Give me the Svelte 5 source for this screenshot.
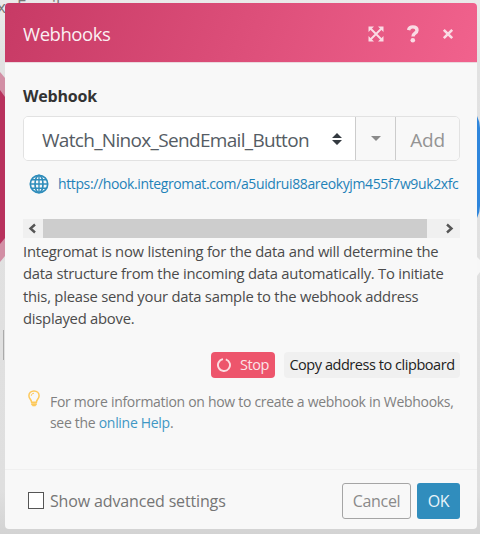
<script>
  const webhooks = ['Watch_Ninox_SendEmail_Button'];
  const address = 'https://hook.integromat.com/a5uidrui88areokyjm455f7w9uk2xfc';
  const message = [
    'Integromat is now listening for the data and will determine the',
    'data structure from the incoming data automatically. To initiate',
    'this, please send your data sample to the webhook address',
    'displayed above.'
  ];
  let selected = $state(webhooks[0]);
  let advanced = $state(false);
</script>

<div class="stage">
  <!-- scenario canvas showing around the dialog -->
  <svg class="canvas" width="480" height="534" viewBox="0 0 480 534" aria-hidden="true">
    <path d="M0 72L5 78V256L0 262Z" fill="#d28fa5" />
    <path d="M0 90L5 97V238L0 244Z" fill="#b8325d" />
    <path d="M477 116Q480 122 480 128V206Q480 212 477 218Z" fill="#2f86dc" />
    <path d="M477 257L480 260V272L477 276Z" fill="#f7f7f7" />
    <path d="M3.5 330V360" stroke="#aaa" />
    <text x="-3" y="13">x</text>
    <text x="17" y="12">Email</text>
  </svg>

  <div class="dialog">
    <header>
      <h1>Webhooks</h1>
      <div class="tools">
        <svg class="expand" width="16" height="16" viewBox="0 0 16 16">
          <path d="M2 2L14 14M14 2L2 14" stroke="currentColor" stroke-width="1.9" />
          <path d="M.5 .5H6L.5 6ZM15.5 .5V6L10 .5ZM15.5 15.5H10L15.5 10ZM.5 15.5V10L6 15.5Z" fill="currentColor" />
        </svg>
        <svg class="help" width="12" height="18" viewBox="0 0 12 18">
          <path d="M1.5 5.2C2 2.9 3.6 1.9 5.8 1.9C8.3 1.9 10 3.2 10 5.2C10 8.4 6 8 6 11.6" fill="none" stroke="currentColor" stroke-width="3.4" />
          <circle cx="5.8" cy="15.3" r="2.3" fill="currentColor" />
        </svg>
        <svg class="close" width="12" height="12" viewBox="0 0 12 12">
          <path d="M1.8 1.8L10.2 10.2M10.2 1.8L1.8 10.2" stroke="currentColor" stroke-width="2.6" />
        </svg>
      </div>
    </header>

    <main>
      <div class="label">Webhook</div>
      <div class="picker">
        <div class="select">
          <span>{selected}</span>
          <svg width="10" height="12" viewBox="0 0 10 12">
            <path d="M0 5L5 0L10 5ZM0 7H10L5 12Z" fill="#343a40" />
          </svg>
        </div>
        <button class="caret" aria-label="More">
          <svg width="10" height="5" viewBox="0 0 10 5"><path d="M0 0H10L5 5Z" fill="#8b8b8b" /></svg>
        </button>
        <button class="add">Add</button>
      </div>

      <div class="address">
        <svg width="20" height="20" viewBox="0 0 20 20" fill="none" stroke="#2f8dbb" stroke-width="1.7">
          <circle cx="10" cy="10" r="8.7" />
          <ellipse cx="10" cy="10" rx="4" ry="8.7" />
          <path d="M10 1V19M1.5 10H18.5M2.6 5.8H17.4M2.6 14.2H17.4" stroke-width="1.4" />
        </svg>
        <span>{address}</span>
      </div>

      <div class="scroll">
        <svg width="20" height="19" viewBox="0 0 20 19"><path d="M12 5.5L7.5 9.5L12 13.5" /></svg>
        <div class="thumb"></div>
        <svg width="20" height="19" viewBox="0 0 20 19"><path d="M7 5.5L11.5 9.5L7 13.5" /></svg>
      </div>

      <p class="message">
        {#each message as line}
          <span>{line}</span>
        {/each}
      </p>

      <div class="actions">
        <button class="stop">
          <svg width="14" height="14" viewBox="0 0 14 14">
            <path d="M8.8 1.3A6 6 0 1 1 6 1.1" fill="none" stroke="#fff" stroke-width="1.9" opacity=".8" />
          </svg>
          <span>Stop</span>
        </button>
        <button class="copy">Copy address to clipboard</button>
      </div>

      <div class="hint">
        <svg width="12" height="17" viewBox="0 0 12 17" fill="none" stroke="#fdc95c" stroke-width="1.5">
          <path d="M3.6 12.2C3.6 9.6 .9 8.8 .9 5.8C.9 2.8 3.1 .9 6 .9S11.1 2.8 11.1 5.8C11.1 8.8 8.4 9.6 8.4 12.2Z" />
          <path d="M3.3 5.8C3.3 4.3 4.3 3.3 6 3.3" stroke-width="1" />
          <path d="M3.5 13.5H8.5V15H7.5V16H4.5V15H3.5Z" fill="#fdc95c" stroke-width=".6" />
        </svg>
        <p>
          <span>For more information on how to create a webhook in Webhooks,</span>
          <span class="second">see the <a href="#help">online Help</a>.</span>
        </p>
      </div>
    </main>

    <footer>
      <label>
        <input type="checkbox" bind:checked={advanced} />
        <span>Show advanced settings</span>
      </label>
      <button class="cancel">Cancel</button>
      <button class="ok">OK</button>
    </footer>
  </div>
</div>

<style>
  :global(body) {
    font-family: 'Open Sans', 'Noto Sans', sans-serif;
  }
  .stage {
    position: relative;
    box-sizing: border-box;
    width: 480px;
    height: 534px;
    padding: 3px 3px 5px 5px;
    overflow: hidden;
    background: linear-gradient(#eaeaea, #e2e2e2 60px, #dfdfdf 490px, #d3d3d3);
  }
  .canvas {
    position: absolute;
    inset: 0;
  }
  .canvas text {
    font-size: 17px;
    fill: #777;
  }
  .dialog {
    position: relative;
    display: flex;
    flex-direction: column;
    height: 526px;
    border-radius: 4px;
    overflow: hidden;
    background: #f8f8f8;
  }
  button {
    box-sizing: border-box;
    margin: 0;
    padding: 0;
    border: none;
    font-family: inherit;
    white-space: nowrap;
  }
  svg {
    display: block;
    flex: none;
  }
  header {
    box-sizing: border-box;
    display: flex;
    align-items: center;
    justify-content: space-between;
    height: 60px;
    padding: 2px 23px 0 18px;
    border-bottom: 1px solid #ead9de;
    background: linear-gradient(110deg, #c73a65, #f1628d);
    color: #fff;
  }
  h1 {
    margin: 0;
    font-size: 18.5px;
    font-weight: 400;
    letter-spacing: -0.45px;
    opacity: 0.92;
  }
  .tools {
    display: flex;
    align-items: center;
    color: #fadbe4;
  }
  .help {
    margin: 0 23px 0 23px;
  }
  main {
    flex: 1;
    padding: 0 17px 0 18px;
  }
  .label {
    height: 53px;
    line-height: 67px;
    font-size: 16px;
    font-weight: 700;
    letter-spacing: -0.2px;
    color: #333;
  }
  .picker {
    box-sizing: border-box;
    display: flex;
    height: 45px;
    border: 1px solid #e2e2e2;
    border-radius: 5px;
    overflow: hidden;
  }
  .select {
    flex: 1;
    display: flex;
    align-items: center;
    justify-content: space-between;
    padding: 0 13px 0 18px;
    background: #fff;
    font-size: 19px;
    letter-spacing: -0.68px;
    color: #555c64;
  }
  .select span {
    padding-top: 3px;
    white-space: nowrap;
  }
  .caret,
  .add {
    border-left: 1px solid #ccc;
    background: #f8f8f8;
    color: #949494;
  }
  .caret {
    display: flex;
    align-items: center;
    justify-content: center;
    width: 40px;
  }
  .add {
    width: 64px;
    padding-top: 2px;
    font-size: 19px;
    letter-spacing: -0.2px;
  }
  .address {
    display: flex;
    align-items: center;
    height: 45px;
    margin-bottom: 13px;
    padding-left: 6px;
    overflow: hidden;
    font-size: 14px;
    letter-spacing: -0.38px;
    white-space: nowrap;
    color: #1f82b8;
  }
  .address span {
    margin-left: 9px;
  }
  .scroll {
    display: flex;
    height: 19px;
    background: #f0f0f0;
  }
  .scroll path {
    fill: none;
    stroke: #555;
    stroke-width: 2.4;
  }
  .thumb {
    width: 384px;
    margin-right: 13px;
    background: #cdcdcd;
  }
  .message {
    margin: 2px 0 0;
    font-size: 14.8px;
    line-height: 22.4px;
    letter-spacing: -0.24px;
    color: #4b4b4b;
  }
  .message span,
  .hint span {
    display: block;
    white-space: nowrap;
  }
  .actions {
    display: flex;
    justify-content: flex-end;
    gap: 9px;
    margin-top: 22px;
  }
  .stop,
  .copy {
    height: 26px;
    border-radius: 4px;
    font-size: 14.5px;
    letter-spacing: -0.45px;
  }
  .stop {
    display: flex;
    align-items: center;
    gap: 9px;
    width: 64px;
    padding-left: 6px;
    background: #ed556c;
    color: #fbe4e8;
  }
  .copy {
    width: 176px;
    background: #f0f0f0;
    color: #222;
  }
  .hint {
    display: flex;
    margin-top: 12px;
    padding-left: 5px;
    font-size: 14px;
    line-height: 21.3px;
    letter-spacing: -0.3px;
    color: #808080;
  }
  .hint p {
    margin: 1px 0 0 10px;
  }
  .hint a {
    color: #3f97c4;
    text-decoration: none;
  }
  footer {
    box-sizing: border-box;
    display: flex;
    align-items: center;
    height: 60px;
    padding: 2px 17px 0 23px;
    border-top: 1px solid #f0f0f0;
  }
  label {
    flex: 1;
    display: flex;
    align-items: center;
    font-size: 16px;
    letter-spacing: -0.15px;
    color: #757575;
  }
  input {
    appearance: none;
    box-sizing: border-box;
    width: 16px;
    height: 17px;
    margin: 0 6px 0 0;
    border: 1px solid #555;
    background: #fff;
  }
  .cancel,
  .ok {
    height: 36px;
    border-radius: 3px;
    font-size: 16px;
    letter-spacing: -0.3px;
  }
  .cancel {
    width: 69px;
    margin-right: 6px;
    border: 1px solid #a5a5a5;
    background: #f8f8f8;
    color: #8a8a8a;
  }
  .ok {
    width: 43px;
    background: #308dbd;
    color: #e9f4fa;
  }
</style>
